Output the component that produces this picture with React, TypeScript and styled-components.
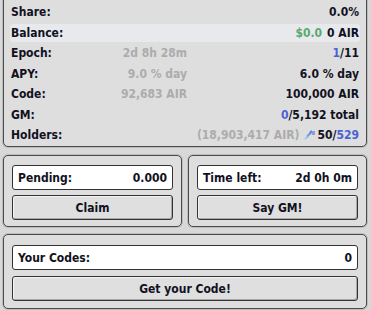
import styled, { createGlobalStyle } from 'styled-components'

const GlobalStyle = createGlobalStyle`
  body {
    margin: 0;
    background: #d8d8d8;
    font-family: 'DejaVu Sans Condensed', 'DejaVu Sans', sans-serif;
    font-weight: bold;
    font-size: 12px;
    color: #111122;
    overflow: hidden;
  }
`

const Page = styled.div`
  display: flex;
  flex-direction: column;
  gap: 7px;
  padding: 0 4px 3px 3px;
`

const Panel = styled.div<{ $top?: number }>`
  background: #dedede;
  border: 1px solid #4a4a4a;
  border-radius: 5px;
  box-shadow: 0 0 0 1px #bdbdbd;
  padding: 9px 8px 6px 8px;
  display: flex;
  flex-direction: column;
  gap: 5px;
  margin-top: ${p => p.$top ?? 0}px;
`

const StatsPanel = styled(Panel)`
  padding: 12px 6px 2px 6px;
  gap: 2.5px;
  border-top-left-radius: 0;
  border-top-right-radius: 0;
`

const CodesPanel = styled(Panel)`
  padding: 10px 8px 7px 8px;
  gap: 6px;
`

const PanelRow = styled.div`
  display: flex;
  gap: 6px;
  & > * {
    flex: 1;
  }
`

const StatRow = styled.div<{ $hl?: boolean }>`
  height: 18px;
  display: grid;
  grid-template-columns: 1fr 1fr;
  align-items: center;
  padding: 0 1px;
  border-radius: 3px;
  background: ${p => (p.$hl ? '#e8e9ec' : 'transparent')};
`

const LeftCell = styled.div`
  display: flex;
  justify-content: space-between;
  align-items: center;
  padding-right: 0;
  margin-right: -2px;
`

const RightCell = styled.div`
  display: flex;
  justify-content: flex-end;
  align-items: center;
  white-space: nowrap;
`

const Muted = styled.span`
  color: #acacac;
  white-space: nowrap;
`

const Blue = styled.span`
  color: #4a62d6;
`

const Green = styled.span`
  color: #5aa872;
  margin-right: 5px;
`

const Field = styled.div`
  height: 25px;
  box-sizing: border-box;
  background: #fff;
  border: 1px solid #333;
  border-radius: 3px;
  display: flex;
  justify-content: space-between;
  align-items: center;
  padding: 0 5px;
`

const Button = styled.button`
  height: 25px;
  box-sizing: border-box;
  background: #dfdfdf;
  border: 1px solid #333;
  border-radius: 3px;
  box-shadow: inset -1px -1px 0 #a8a8a8, inset 1px 1px 0 #f4f4f4;
  font: inherit;
  color: inherit;
  padding: 0;
  cursor: pointer;
`

const Bolt = () => (
  <svg width="12" height="10" viewBox="0 0 12 10" style={{ marginRight: 2 }}>
    <defs>
      <linearGradient id="bg" x1="0" y1="1" x2="1" y2="0">
        <stop offset="0" stopColor="#b5dcf8" />
        <stop offset="1" stopColor="#3c68e2" />
      </linearGradient>
    </defs>
    <path d="M0 10 L4 6 L3 6 L7 2 L6 2 L9 0 L8 3 L9 3 L5 7 L6 7 L1 10 Z" fill="url(#bg)" />
    <path d="M8 2 L12 2 M9 4 L12 4" stroke="#3c5fd8" strokeWidth="1" />
  </svg>
)

export default function App() {
  return (
    <>
      <GlobalStyle />
      <Page>
        <StatsPanel $top={-10}>
          <StatRow>
            <LeftCell>Share:</LeftCell>
            <RightCell>0.0%</RightCell>
          </StatRow>
          <StatRow $hl>
            <LeftCell>Balance:</LeftCell>
            <RightCell>
              <Green>$0.0</Green>0 AIR
            </RightCell>
          </StatRow>
          <StatRow>
            <LeftCell>
              Epoch:<Muted>2d 8h 28m</Muted>
            </LeftCell>
            <RightCell>
              <Blue>1</Blue>/11
            </RightCell>
          </StatRow>
          <StatRow>
            <LeftCell>
              APY:<Muted>9.0 % day</Muted>
            </LeftCell>
            <RightCell>6.0 % day</RightCell>
          </StatRow>
          <StatRow>
            <LeftCell>
              Code:<Muted>92,683 AIR</Muted>
            </LeftCell>
            <RightCell>100,000 AIR</RightCell>
          </StatRow>
          <StatRow>
            <LeftCell>GM:</LeftCell>
            <RightCell>
              <Blue>0</Blue>/5,192 total
            </RightCell>
          </StatRow>
          <StatRow>
            <LeftCell>Holders:</LeftCell>
            <RightCell>
              <Muted style={{ marginRight: 4 }}>(18,903,417 AIR)</Muted>
              <Bolt />
              50/<Blue>529</Blue>
            </RightCell>
          </StatRow>
        </StatsPanel>
        <PanelRow>
          <Panel $top={1}>
            <Field>
              <span>Pending:</span>
              <span>0.000</span>
            </Field>
            <Button>Claim</Button>
          </Panel>
          <Panel $top={1}>
            <Field>
              <span>Time left:</span>
              <span>2d 0h 0m</span>
            </Field>
            <Button>Say GM!</Button>
          </Panel>
        </PanelRow>
        <CodesPanel>
          <Field>
            <span>Your Codes:</span>
            <span>0</span>
          </Field>
          <Button>Get your Code!</Button>
        </CodesPanel>
      </Page>
    </>
  )
}
